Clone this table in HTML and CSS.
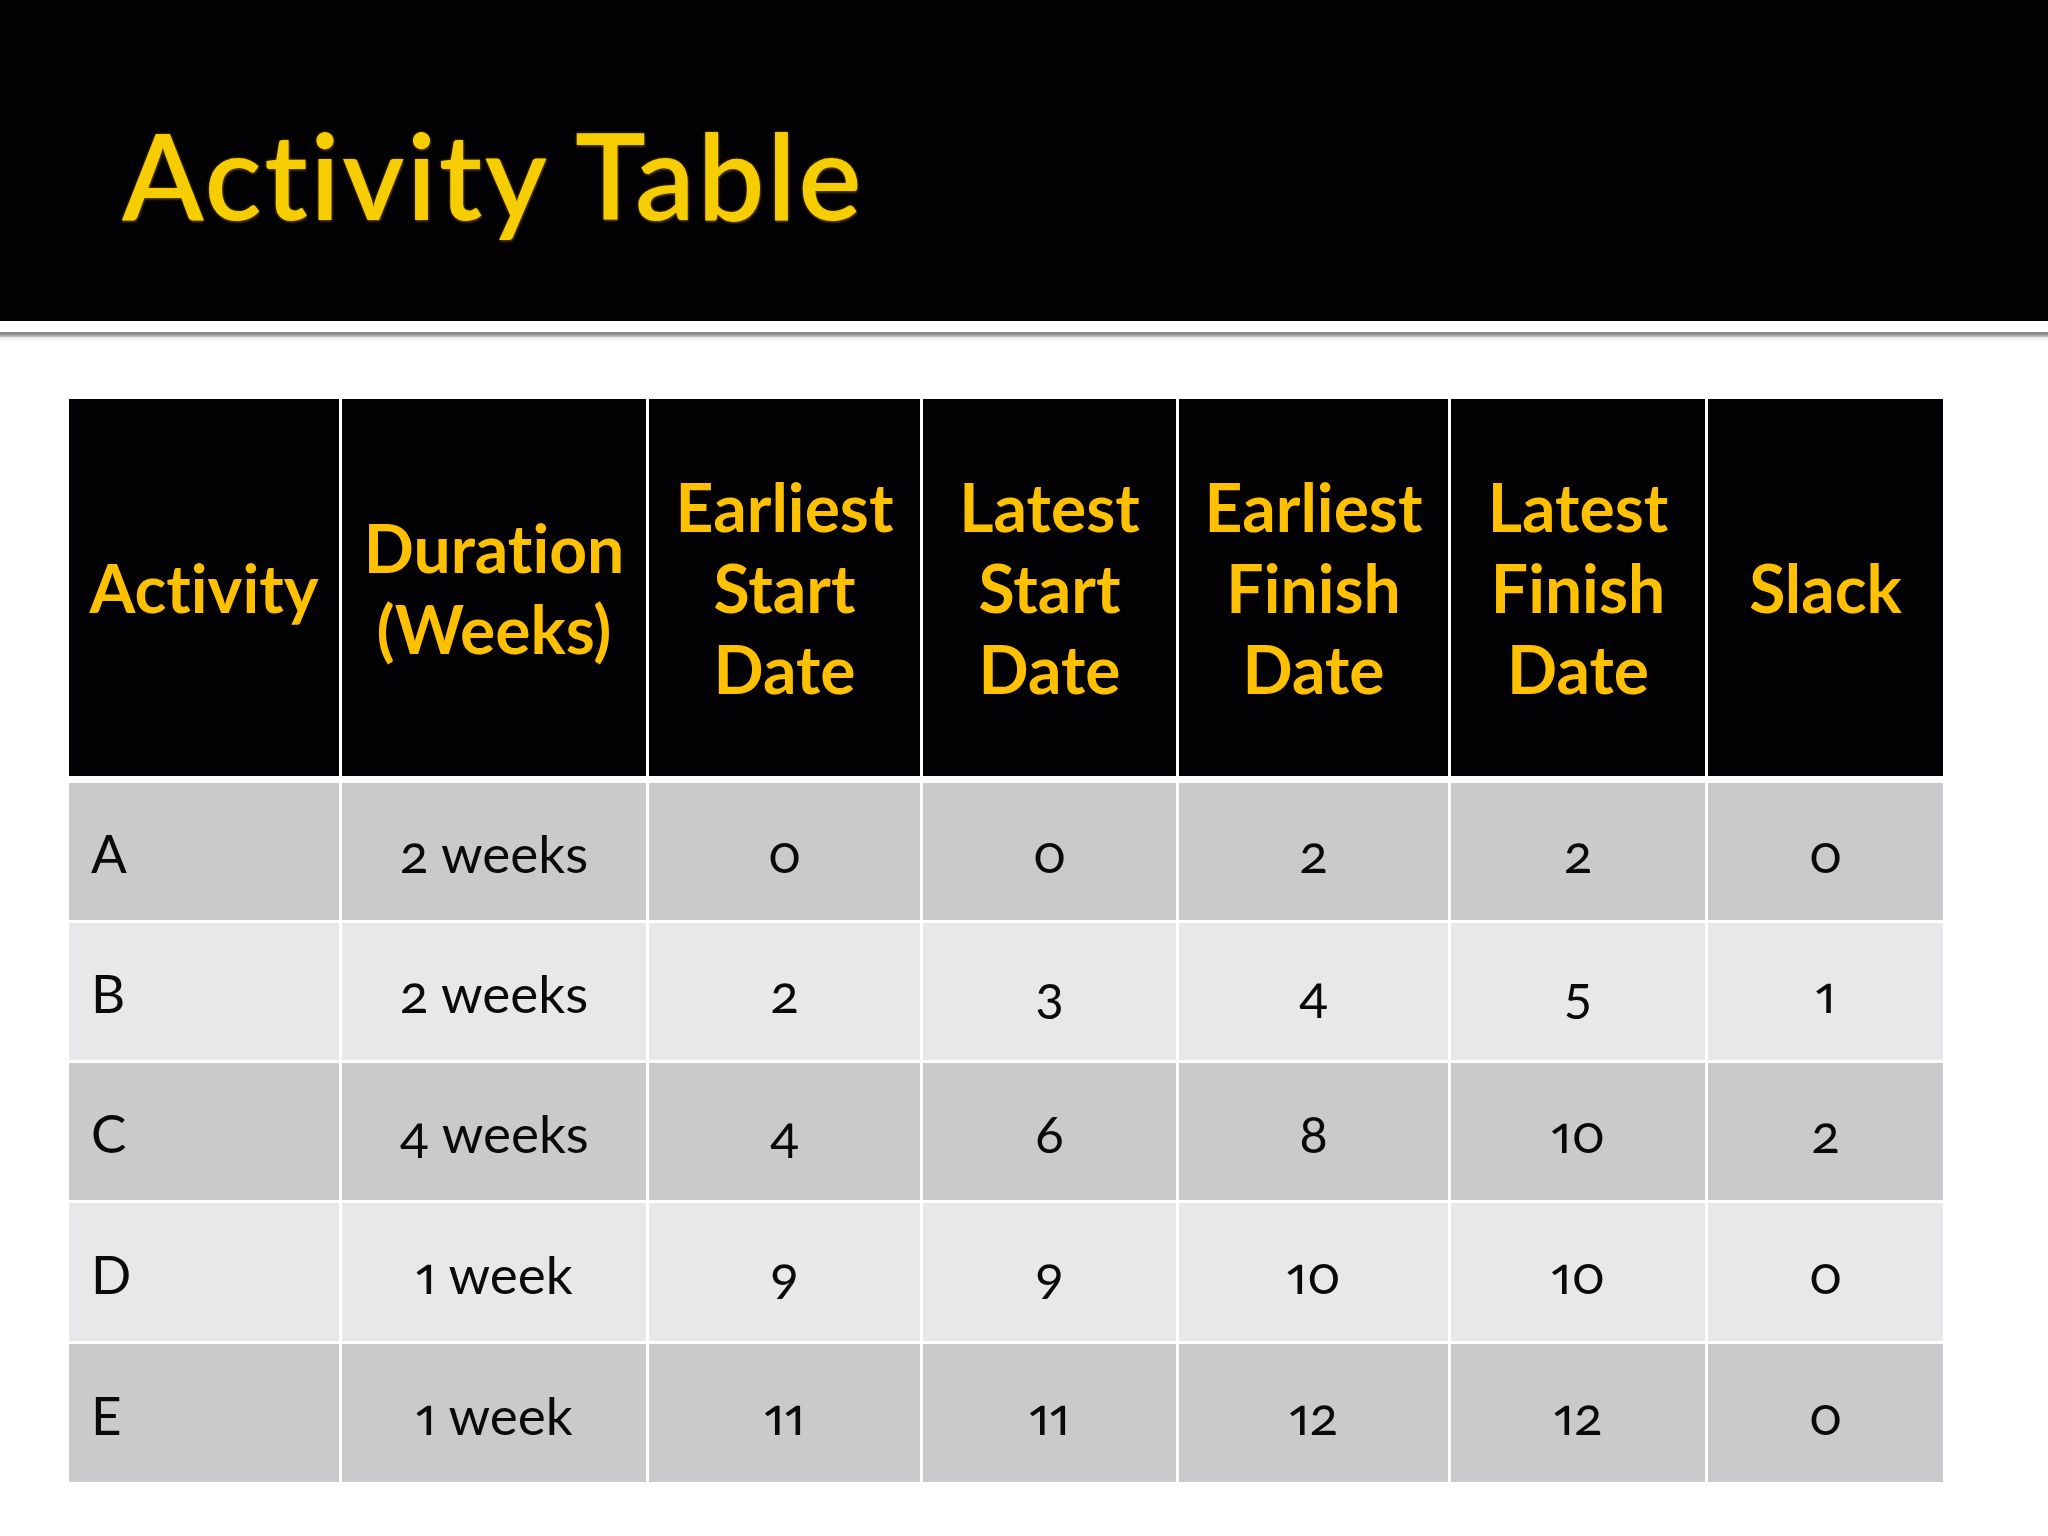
FILE: index.html
```html
<!DOCTYPE html>
<html lang="en">
<head>
<meta charset="utf-8">
<title>Activity Table</title>
<link rel="stylesheet" href="styles.css">
</head>
<body>
<header class="banner">
  <h1 class="title">Activity Table</h1>
</header>
<div class="rule"></div>
<main class="sheet">
  <div class="grid">
    <div class="cell head">Activity</div>
    <div class="cell head">Duration<br>(Weeks)</div>
    <div class="cell head">Earliest<br>Start<br>Date</div>
    <div class="cell head">Latest<br>Start<br>Date</div>
    <div class="cell head">Earliest<br>Finish<br>Date</div>
    <div class="cell head">Latest<br>Finish<br>Date</div>
    <div class="cell head">Slack</div>

    <div class="cell odd first">A</div>
    <div class="cell odd">2 weeks</div>
    <div class="cell odd">0</div>
    <div class="cell odd">0</div>
    <div class="cell odd">2</div>
    <div class="cell odd">2</div>
    <div class="cell odd">0</div>

    <div class="cell even first">B</div>
    <div class="cell even">2 weeks</div>
    <div class="cell even">2</div>
    <div class="cell even">3</div>
    <div class="cell even">4</div>
    <div class="cell even">5</div>
    <div class="cell even">1</div>

    <div class="cell odd first">C</div>
    <div class="cell odd">4 weeks</div>
    <div class="cell odd">4</div>
    <div class="cell odd">6</div>
    <div class="cell odd">8</div>
    <div class="cell odd">10</div>
    <div class="cell odd">2</div>

    <div class="cell even first">D</div>
    <div class="cell even">1 week</div>
    <div class="cell even">9</div>
    <div class="cell even">9</div>
    <div class="cell even">10</div>
    <div class="cell even">10</div>
    <div class="cell even">0</div>

    <div class="cell odd first">E</div>
    <div class="cell odd">1 week</div>
    <div class="cell odd">11</div>
    <div class="cell odd">11</div>
    <div class="cell odd">12</div>
    <div class="cell odd">12</div>
    <div class="cell odd">0</div>
  </div>
</main>
</body>
</html>
```

FILE: styles.css
```css
html, body {
  margin: 0;
  padding: 0;
  background: #ffffff;
}

body {
  width: 2048px;
  height: 1536px;
  overflow: hidden;
  font-family: Lato, "Open Sans", "Liberation Sans", sans-serif;
  font-variant-numeric: oldstyle-nums proportional-nums;
  font-variant-ligatures: none;
}

.banner {
  height: 321px;
  background: #020104;
  display: flex;
  align-items: flex-start;
  padding-left: 122px;
  box-sizing: border-box;
}

.title {
  margin: 0;
  padding-top: 104px;
  font-size: 119px;
  line-height: 140px;
  font-weight: 600;
  color: #f6cd00;
  text-shadow: 0 0 3px rgba(160, 120, 0, 0.7), 1px 2px 2px rgba(90, 60, 0, 0.6);
  letter-spacing: 2.5px;
}

.rule {
  margin-top: 11px;
  height: 5px;
  background: linear-gradient(to bottom, #7d7d7d 0%, #9a9a9a 50%, #c4c4c4 100%);
  box-shadow: 0 3px 3px rgba(0, 0, 0, 0.08);
}

.sheet {
  padding-top: 62px;
  padding-left: 69px;
}

.grid {
  display: grid;
  width: 1874px;
  grid-template-columns: 270px 304px 271px 253px 269px 254px 235px;
  grid-template-rows: 381px 137px 137px 137px 138px 138px;
  column-gap: 3px;
  row-gap: 3px;
}

.cell {
  display: flex;
  align-items: center;
  justify-content: center;
  text-align: center;
  box-sizing: border-box;
}

.head {
  background: #020104;
  color: #ffc000;
  font-weight: 700;
  font-size: 66px;
  line-height: 81px;
  margin-bottom: 4px;
}

.odd,
.even {
  color: #0a0a0a;
  font-size: 53px;
  font-weight: 400;
  padding-top: 2px;
}

.odd {
  background: #cac9cc;
}

.even {
  background: #e8e7ea;
}

.first {
  justify-content: flex-start;
  padding-left: 22px;
}
```
